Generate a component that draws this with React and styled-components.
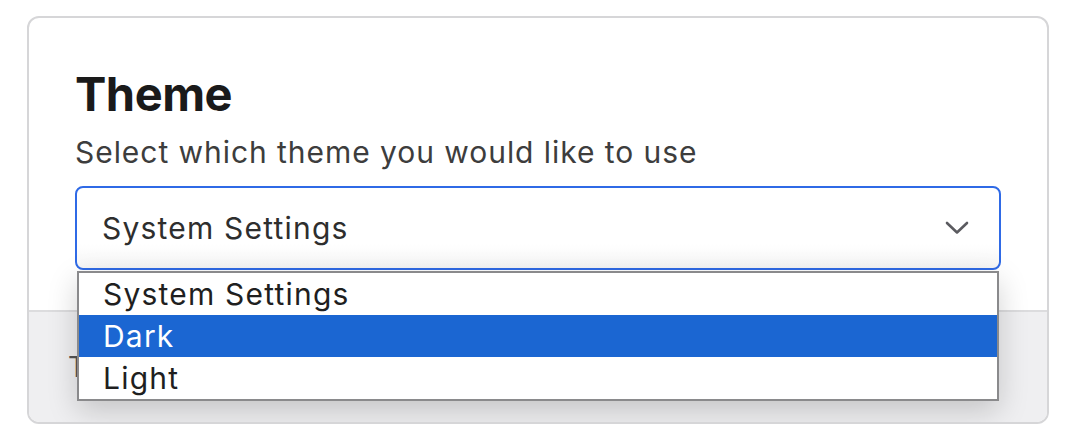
import React from 'react';
import styled, { createGlobalStyle, css } from 'styled-components';

const GlobalStyle = createGlobalStyle`
  body {
    margin: 0;
    background: #ffffff;
    font-family: Inter, "Noto Sans", sans-serif;
  }
`;

const Page = styled.div`
  padding: 16px 29px 18px 27px;
`;

const Card = styled.section`
  border: 2px solid #d6d6d8;
  border-radius: 12px;
  overflow: hidden;
  background: #ffffff;
`;

const CardBody = styled.div`
  padding: 48px 46px 40px;
`;

const Title = styled.h2`
  margin: 0;
  font-size: 47px;
  line-height: 1.2;
  font-weight: 700;
  color: #1a1a1a;
  letter-spacing: -0.5px;
`;

const Subtitle = styled.p`
  margin: 9px 0 13px;
  font-size: 30px;
  line-height: 1.4;
  letter-spacing: 0.95px;
  color: #3d3d3d;
`;

const SelectWrap = styled.div`
  position: relative;
`;

const SelectBox = styled.div`
  height: 84px;
  box-sizing: border-box;
  border: 2px solid #2f6ae6;
  border-radius: 8px;
  display: flex;
  align-items: center;
  justify-content: space-between;
  padding: 0 30px 0 25px;
  font-size: 30px;
  letter-spacing: 1.2px;
  color: #2e2e2e;
  background: linear-gradient(#ffffff 70%, #f6f6f6);
`;

const Chevron = () => (
  <svg width="24" height="14" viewBox="0 0 24 14" fill="none">
    <path d="M2 2 L12 11.5 L22 2" stroke="#5b5b60" strokeWidth="2.6" strokeLinecap="round" strokeLinejoin="round" />
  </svg>
);

const OptionList = styled.ul`
  position: absolute;
  top: calc(100% + 1px);
  left: 2px;
  right: 2px;
  margin: 0;
  padding: 0;
  list-style: none;
  border: 2px solid #8a8a8c;
  background: #ffffff;
  box-shadow: 0 10px 28px rgba(0, 0, 0, 0.18);
  z-index: 2;
`;

const Option = styled.li`
  height: 42px;
  display: flex;
  align-items: center;
  padding-left: 24px;
  font-size: 30px;
  letter-spacing: 1.2px;
  color: #1f1f1f;
  ${props =>
    props.selected &&
    css`
      background: #1b66d2;
      color: #ffffff;
    `};
`;

const Footer = styled.div`
  border-top: 2px solid #dcdcde;
  background: #efeff1;
  height: 110px;
  display: flex;
  align-items: center;
  padding-left: 39px;
  font-size: 28px;
  color: #555555;
`;

export default function App() {
  const options = ['System Settings', 'Dark', 'Light'];
  return (
    <Page>
      <GlobalStyle />
      <Card>
        <CardBody>
          <Title>Theme</Title>
          <Subtitle>Select which theme you would like to use</Subtitle>
          <SelectWrap>
            <SelectBox>
              <span>System Settings</span>
              <Chevron />
            </SelectBox>
            <OptionList>
              {options.map(opt => (
                <Option key={opt} selected={opt === 'Dark'}>
                  {opt}
                </Option>
              ))}
            </OptionList>
          </SelectWrap>
        </CardBody>
        <Footer>This setting applies to this device only.</Footer>
      </Card>
    </Page>
  );
}
